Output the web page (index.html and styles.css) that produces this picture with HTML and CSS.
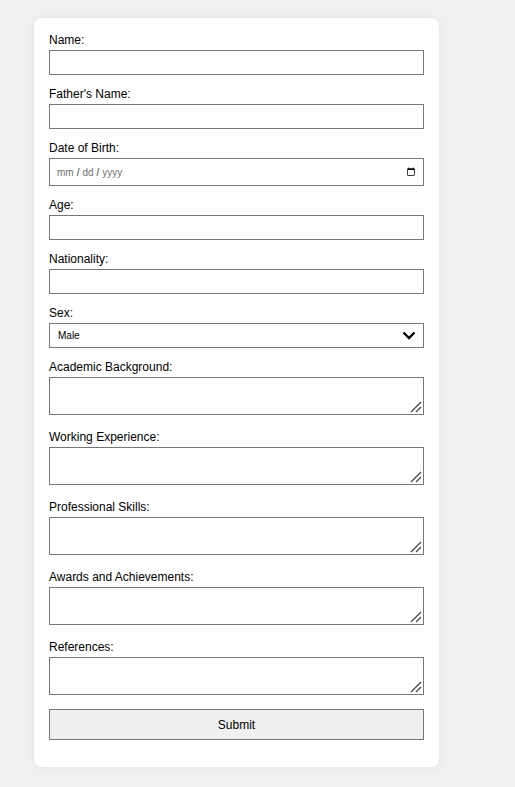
FILE: index.html
```html
<!DOCTYPE html>
<html lang="en">
<head>
<meta charset="utf-8">
<title>Form</title>
<link rel="stylesheet" href="styles.css">
</head>
<body>
<form class="card">
  <div class="field"><label for="name">Name:</label><input id="name" type="text"></div>
  <div class="field"><label for="father">Father's Name:</label><input id="father" type="text"></div>
  <div class="field"><label for="dob">Date of Birth:</label><input id="dob" type="date"></div>
  <div class="field"><label for="age">Age:</label><input id="age" type="text"></div>
  <div class="field"><label for="nat">Nationality:</label><input id="nat" type="text"></div>
  <div class="field"><label for="sex">Sex:</label>
    <div class="select-wrap">
      <select id="sex"><option>Male</option><option>Female</option></select>
      <svg class="chevron" width="14" height="9" viewBox="0 0 14 9"><polyline points="1.5,1.5 7,7 12.5,1.5" fill="none" stroke="#000" stroke-width="2.4"/></svg>
    </div>
  </div>
  <div class="field area"><label for="acad">Academic Background:</label><div class="area-wrap"><textarea id="acad"></textarea><svg class="grip" width="12" height="12" viewBox="0 0 12 12"><line x1="1" y1="11" x2="11" y2="1" stroke="#444" stroke-width="1.3"/><line x1="6" y1="11" x2="11" y2="6" stroke="#444" stroke-width="1.3"/></svg></div></div>
  <div class="field area"><label for="work">Working Experience:</label><div class="area-wrap"><textarea id="work"></textarea><svg class="grip" width="12" height="12" viewBox="0 0 12 12"><line x1="1" y1="11" x2="11" y2="1" stroke="#444" stroke-width="1.3"/><line x1="6" y1="11" x2="11" y2="6" stroke="#444" stroke-width="1.3"/></svg></div></div>
  <div class="field area"><label for="skills">Professional Skills:</label><div class="area-wrap"><textarea id="skills"></textarea><svg class="grip" width="12" height="12" viewBox="0 0 12 12"><line x1="1" y1="11" x2="11" y2="1" stroke="#444" stroke-width="1.3"/><line x1="6" y1="11" x2="11" y2="6" stroke="#444" stroke-width="1.3"/></svg></div></div>
  <div class="field area"><label for="awards">Awards and Achievements:</label><div class="area-wrap"><textarea id="awards"></textarea><svg class="grip" width="12" height="12" viewBox="0 0 12 12"><line x1="1" y1="11" x2="11" y2="1" stroke="#444" stroke-width="1.3"/><line x1="6" y1="11" x2="11" y2="6" stroke="#444" stroke-width="1.3"/></svg></div></div>
  <div class="field area last"><label for="refs">References:</label><div class="area-wrap"><textarea id="refs"></textarea><svg class="grip" width="12" height="12" viewBox="0 0 12 12"><line x1="1" y1="11" x2="11" y2="1" stroke="#444" stroke-width="1.3"/><line x1="6" y1="11" x2="11" y2="6" stroke="#444" stroke-width="1.3"/></svg></div></div>
  <button type="submit" class="submit">Submit</button>
</form>
</body>
</html>
```
FILE: styles.css
```css
html, body {
  margin: 0;
  padding: 0;
}
body {
  background: #f0f0f0;
  font-family: "Liberation Sans", Arial, sans-serif;
  font-size: 12px;
  color: #000;
  padding: 18px 0 20px 34px;
}
.card {
  width: 375px;
  padding: 15px;
  background: #fff;
  border-radius: 8px;
  box-shadow: 0 0 8px rgba(0, 0, 0, 0.06);
}
.field {
  display: flex;
  flex-direction: column;
  gap: 3px;
  margin-bottom: 12px;
}
.field.area {
  margin-bottom: 15px;
}
.field.area.last {
  margin-bottom: 14px;
}
.field label {
  display: block;
  font-size: 12px;
  line-height: 14px;
  height: 14px;
}
.field input,
.field select,
.field textarea {
  box-sizing: border-box;
  width: 375px;
  margin: 0;
  border: 1px solid #767676;
  border-radius: 0;
  background-color: #fff;
  font-family: "Liberation Sans", Arial, sans-serif;
  font-size: 10px;
  color: #000;
  outline: none;
}
.field input {
  height: 25px;
  padding: 2px 5px;
}
.field input[type="date"] {
  height: 28px;
  padding: 2px 5px 2px 6px;
}
.field input[type="date"]::-webkit-datetime-edit-month-field,
.field input[type="date"]::-webkit-datetime-edit-day-field,
.field input[type="date"]::-webkit-datetime-edit-year-field {
  color: #6f6f6f;
}
.field input[type="date"]::-webkit-datetime-edit-text {
  color: #333;
  padding: 0 2px;
}
.select-wrap,
.area-wrap {
  position: relative;
  width: 375px;
}
.field select {
  display: block;
  height: 25px;
  padding: 2px 8px;
  -webkit-appearance: none;
  appearance: none;
}
.chevron {
  position: absolute;
  right: 8px;
  top: 8px;
  pointer-events: none;
}
.field textarea {
  display: block;
  height: 38px;
  padding: 2px 5px;
  resize: none;
}
.grip {
  position: absolute;
  right: 2px;
  bottom: 2px;
  pointer-events: none;
}
.submit {
  box-sizing: border-box;
  display: block;
  width: 375px;
  height: 31px;
  margin: 0 0 12px;
  border: 1px solid #767676;
  border-radius: 0;
  background: #efefef;
  font-family: "Liberation Sans", Arial, sans-serif;
  font-size: 12px;
  color: #000;
}
```
